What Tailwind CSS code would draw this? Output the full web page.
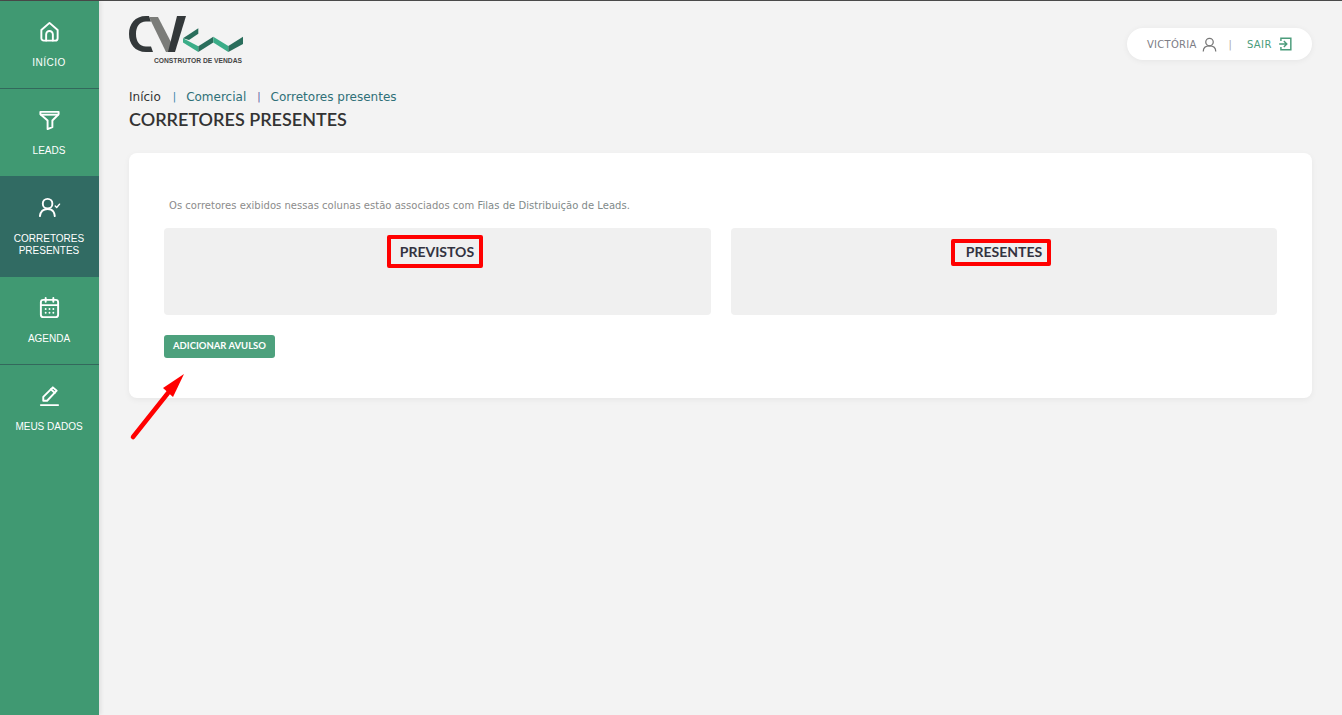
<!DOCTYPE html>
<html lang="pt-BR">
<head>
<meta charset="utf-8">
<script src="https://cdn.jsdelivr.net/npm/@tailwindcss/browser@4"></script>
<title>Corretores presentes</title>
</head>
<body class="m-0 h-[715px] w-[1342px] overflow-hidden bg-[#f3f3f3] font-['Liberation_Sans',sans-serif]">
<div class="h-px w-full bg-[#4a4a4a]"></div>
<div class="flex h-[714px] w-full">
  <aside class="h-full w-[99px] shrink-0 bg-[#409972] text-white shadow-[2px_0_4px_rgba(0,0,0,0.08)]">
    <a class="flex h-[88px] flex-col items-center border-b border-[#33685c] pt-[19px] pr-px">
      <svg class="h-[23px] w-[23px]" viewBox="0 0 24 24" fill="none" stroke="currentColor" stroke-width="2" stroke-linejoin="round" stroke-linecap="round"><path d="M3.500 10.500 12 3l8.500 7.500V19a2.500 2.500 0 0 1-2.500 2.500H6A2.500 2.500 0 0 1 3.500 19z"/><path d="M8.500 21.500V15a3.500 3.500 0 0 1 7 0v6.500"/></svg>
      <span class="mt-[13px] text-[10px] leading-[13px] tracking-[0.5px]">INÍCIO</span>
    </a>
    <a class="flex h-[87px] flex-col items-center pt-[19px] pr-px">
      <svg class="h-[23px] w-[23px]" viewBox="0 0 24 24" fill="none" stroke="currentColor" stroke-width="2" stroke-linejoin="round"><path d="M2.500 4h19v2.500L15 13v7l-5 2v-9L2.500 6.500z"/><path d="M2.500 7h19"/></svg>
      <span class="mt-[13px] text-[10px] leading-[13px]">LEADS</span>
    </a>
    <a class="flex h-[101px] flex-col items-center bg-[#316b63] pt-[20px] pr-px">
      <svg class="h-[23px] w-[23px]" viewBox="0 0 24 24" fill="none" stroke="currentColor" stroke-width="2" stroke-linecap="round" stroke-linejoin="round"><circle cx="10" cy="8" r="5"/><path d="M2 21c.6-4.600 3.800-7.500 8-7.500 2.600 0 4.800 1 6.200 3 .6.8 1.100 2.400 1.300 4.500"/><path d="m18 10.500 1.500 1.500 3-3.500" stroke-width="1.500"/></svg>
      <span class="mt-[14px] text-center text-[10px] leading-[12px]">CORRETORES<br>PRESENTES</span>
    </a>
    <a class="flex h-[88px] flex-col items-center border-b border-[#33685c] pt-[19px] pr-px">
      <svg class="h-[23px] w-[23px]" viewBox="0 0 24 24" fill="none" stroke="currentColor" stroke-width="2" stroke-linecap="round"><rect x="3" y="4" width="18" height="18" rx="2.500"/><path d="M3 9.500h18M8 2v4M16 2v4"/><path d="M8 13.500h.01M12 13.500h.01M16 13.500h.01M8 17.500h.01M12 17.500h.01M16 17.500h.01"/></svg>
      <span class="mt-[13px] text-[10px] leading-[13px]">AGENDA</span>
    </a>
    <a class="flex h-[87px] flex-col items-center pt-[19px] pr-px">
      <svg class="h-[23px] w-[23px]" viewBox="0 0 24 24" fill="none" stroke="currentColor" stroke-width="2" stroke-linejoin="round" stroke-linecap="round"><path d="M5.500 17.500v-4L15.500 3.500l4 3.500-10 10.500z"/><path d="m13.500 5.500 4 3.800"/><path d="M3 22h18"/></svg>
      <span class="mt-[13px] text-[10px] leading-[13px]">MEUS DADOS</span>
    </a>
  </aside>
  <main class="relative min-w-0 flex-1 pl-[30px] pr-[30px]">
    <header class="flex h-[73px] items-start justify-between">
      <div class="relative mt-[15px] h-[50px] w-[116px]">
        <svg class="absolute left-0 top-0" width="116" height="38" viewBox="0 0 116 38">
          <path d="M20 0H17C6 0 0 8 0 18S6 36 17 36h7l-2-5.500h-5C10.500 30.500 7 25.500 7 18S10.500 5.500 17 5.500h5z" fill="#33383a"/>
          <path d="M20 1h9l15 29-3 6h-4z" fill="#7b7c79"/>
          <path d="M48 0h9L46 36h-7z" fill="#33383a"/>
          <path d="M54 22.300 69.300 12.300v5.500L60 24z" fill="#2a6e5c"/>
          <path d="M54 22.300 69.300 30.200v5.800L54 26.500z" fill="#3bad88"/>
          <path d="M69.300 30.200 84.300 20.700v5.800L69.300 36z" fill="#2a6e5c"/>
          <path d="M84.300 20.700 99.300 30v6L84.300 26.500z" fill="#3bad88"/>
          <path d="M99.300 30 114 20.700v7.300L99.300 36z" fill="#2a6e5c"/>
        </svg>
        <span class="absolute left-[25px] top-[40px] whitespace-nowrap text-[6.700px] leading-[9px] font-bold text-[#444]">CONSTRUTOR DE VENDAS</span>
      </div>
      <div class="mt-[27px] flex h-[32px] w-[185px] items-center rounded-full bg-white pl-[20px] text-[10px] font-['DejaVu_Sans',sans-serif] shadow-[0_1px_6px_rgba(0,0,0,0.06)]">
        <span class="tracking-[0.25px] text-[#7d7d85]">VICTÓRIA</span>
        <svg class="ml-[5px] h-[15px] w-[15px] text-[#777]" viewBox="0 0 24 24" fill="none" stroke="currentColor" stroke-width="2"><circle cx="12" cy="8" r="6"/><path d="M2 23c0-6 4-9 10-9s10 3 10 9"/></svg>
        <span class="ml-[12px] text-[#aaa]">|</span>
        <span class="ml-[15px] tracking-[0.4px] text-[#4b9c7b]">SAIR</span>
        <svg class="ml-[6px] h-[14px] w-[14px] text-[#4b9c7b]" viewBox="0 0 24 24" fill="none" stroke="currentColor" stroke-width="2.500"><path d="M5 7V2h17v20H5v-5"/><path d="M2 12h12M10 7l5 5-5 5"/></svg>
      </div>
    </header>
    <nav class="mt-[15px] flex h-[16px] items-center text-[12px] leading-[16px] text-[#2f7078] font-['DejaVu_Sans',sans-serif]">
      <span class="text-[#333]">Início</span>
      <span class="ml-[12px] text-[10px] text-[#2a7fa8]">|</span>
      <span class="ml-[10px]">Comercial</span>
      <span class="ml-[11px] text-[10px] text-[#5a4fa0]">|</span>
      <span class="ml-[10px]">Corretores presentes</span>
    </nav>
    <h1 class="mt-[1px] h-[26px] text-[18px] leading-[26px] font-semibold text-[#333] font-['Lato',sans-serif]">CORRETORES PRESENTES</h1>
    <section class="mt-[21px] h-[245px] w-[1183px] rounded-[8px] bg-white px-[35px] shadow-[0_2px_6px_rgba(0,0,0,0.05)]">
      <p class="ml-[5px] pt-[46px] text-[10px] leading-[14px] tracking-[0.022px] text-[#8b8b8b] font-['DejaVu_Sans',sans-serif]">Os corretores exibidos nessas colunas estão associados com <span class="text-[#7f8a8a]">Filas de Distribuição de Leads.</span></p>
      <div class="mt-[15px] grid grid-cols-2 gap-[20px]">
        <div class="flex h-[87px] justify-center rounded-[4px] bg-[#f0f0f0] pt-[7px] pr-[5px]">
          <h2 class="h-[33px] w-[96px] rounded-[2px] border-[4px] border-[#ff0000] pl-[9px] text-[14px] leading-[25px] font-bold whitespace-nowrap text-[#33333f] font-['Lato',sans-serif]">PREVISTOS</h2>
        </div>
        <div class="flex h-[87px] justify-center rounded-[4px] bg-[#f0f0f0] pt-[11px] pr-[6px]">
          <h2 class="h-[27px] w-[100px] rounded-[2px] border-[4px] border-[#ff0000] pl-[11px] text-[14px] leading-[17px] font-bold whitespace-nowrap text-[#33333f] font-['Lato',sans-serif]">PRESENTES</h2>
        </div>
      </div>
      <button class="mt-[20px] flex h-[23px] w-[111px] items-center justify-center rounded-[3px] bg-[#4da17d] text-[9.500px] font-bold text-white font-['Lato',sans-serif]">ADICIONAR AVULSO</button>
    </section>
    <svg class="absolute left-[28px] top-[373px]" width="60" height="68" viewBox="0 0 60 68" aria-hidden="true">
      <path d="M6 63 41 19" stroke="#ff0000" stroke-width="4.500" stroke-linecap="round"/>
      <path d="M57 0 36 14l10 9z" fill="#ff0000"/>
    </svg>
  </main>
</div>
</body>
</html>
